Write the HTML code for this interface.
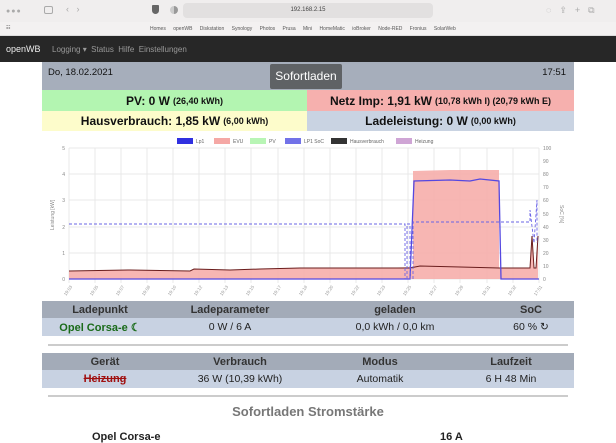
<!DOCTYPE html>
<html><head><meta charset="utf-8"><style>
*{margin:0;padding:0;box-sizing:border-box}
body{width:616px;height:436px;overflow:hidden;background:#fff;font-family:"Liberation Sans",sans-serif;position:relative}
.abs{position:absolute}
.tb{left:0;top:0;width:616px;height:22px;background:#f0eeee}
.bm{left:0;top:22px;width:616px;height:14px;background:#f3f1f1;border-bottom:1px solid #ddd;font-size:5px;color:#555}
.nav{left:0;top:36px;width:616px;height:26px;background:#272727;color:#999;font-size:8px}
.c{left:42px;width:532px}
.cell{position:absolute;display:flex;align-items:center;justify-content:center;font-weight:bold;font-size:12px;color:#111}
.cell small{font-size:9px;margin-left:3px}
table{border-collapse:collapse;width:532px;font-size:10.5px;text-align:center;table-layout:fixed}
th{background:#a3abb8;color:#333;height:17px;font-weight:bold;font-size:11px}
td{background:#c8d2e2;color:#222;height:18px}
.hr{height:2px;background:#ccc;left:48px;width:520px}
</style></head><body>
<div class="abs tb">
 <div class="abs" style="left:6px;top:8px;font-size:7px;color:#aaa;letter-spacing:1px">●●●</div>
 <div class="abs" style="left:44px;top:6px;width:9px;height:8px;border:1px solid #aaa;border-radius:2px"></div>
 <div class="abs" style="left:66px;top:4px;font-size:9px;color:#aaa">‹ &nbsp; ›</div>
 <div class="abs" style="left:152px;top:5px;width:7px;height:9px;background:#666;border-radius:1px 1px 4px 4px"></div>
 <div class="abs" style="left:170px;top:6px;width:8px;height:8px;border-radius:50%;background:linear-gradient(90deg,#ccc 50%,#999 50%)"></div>
 <div class="abs" style="left:183px;top:3px;width:250px;height:15px;background:#e2e0e0;border-radius:4px;font-size:6px;text-align:center;line-height:15px;color:#444">192.168.2.15</div>
 <div class="abs" style="left:546px;top:5px;font-size:9px;color:#aaa;letter-spacing:8px">◌⇪+⧉</div>
</div>
<div class="abs bm"><span class="abs" style="left:6px;top:3px">☷</span><span class="abs" style="left:150px;top:4px;word-spacing:6px">Homes openWB Diskstation Synology&nbsp;Photos Prusa&nbsp;Mini HomeMatic ioBroker Node-RED Fronius SolarWeb</span></div>
<div class="abs nav"><span class="abs" style="left:6px;top:8px;color:#eee;font-size:9px">openWB</span><span class="abs" style="left:52px;top:9px">Logging ▾ &nbsp;Status &nbsp;Hilfe &nbsp;Einstellungen</span></div>

<div class="abs c" style="top:62px;height:28px;background:#a6aebb">
 <span class="abs" style="left:6px;top:5px;font-size:9.5px;color:#111">Do, 18.02.2021</span>
 <div class="abs" style="left:228px;top:2px;width:72px;height:25px;background:#5f6265;color:#fff;font-size:12px;text-align:center;line-height:25px;border-radius:2px">Sofortladen</div>
 <span class="abs" style="right:8px;top:5px;font-size:9.5px;color:#111">17:51</span>
</div>
<div class="cell" style="left:42px;top:90px;width:265px;height:21px;background:#b3f5b1">PV: 0 W<small>(26,40 kWh)</small></div>
<div class="cell" style="left:307px;top:90px;width:267px;height:21px;background:#f6b0ae">Netz Imp: 1,91 kW<small>(10,78 kWh I) (20,79 kWh E)</small></div>
<div class="cell" style="left:42px;top:111px;width:265px;height:20px;background:#fdfccb">Hausverbrauch: 1,85 kW<small>(6,00 kWh)</small></div>
<div class="cell" style="left:307px;top:111px;width:267px;height:20px;background:#c9d3e2">Ladeleistung: 0 W<small>(0,00 kWh)</small></div>

<svg class="abs" style="left:0;top:132px" width="616" height="168" viewBox="0 132 616 168" font-family="Liberation Sans" font-size="5">
 <g>
  <rect x="177" y="138" width="16" height="6" fill="#3030e0"/><text x="196" y="143" fill="#666">Lp1</text>
  <rect x="214" y="138" width="16" height="6" fill="#f5a8a5"/><text x="233" y="143" fill="#666">EVU</text>
  <rect x="250" y="138" width="16" height="6" fill="#b8f5b5"/><text x="269" y="143" fill="#666">PV</text>
  <rect x="285" y="138" width="16" height="6" fill="#7272e8"/><text x="304" y="143" fill="#666">LP1 SoC</text>
  <rect x="331" y="138" width="16" height="6" fill="#333"/><text x="350" y="143" fill="#666">Hausverbrauch</text>
  <rect x="396" y="138" width="16" height="6" fill="#cfa5d5"/><text x="415" y="143" fill="#666">Heizung</text>
 </g>
 <g stroke="#e2e2e2" stroke-width="0.7">
  <line x1="69" y1="148" x2="539" y2="148"/><line x1="69" y1="174" x2="539" y2="174"/><line x1="69" y1="200" x2="539" y2="200"/><line x1="69" y1="227" x2="539" y2="227"/><line x1="69" y1="253" x2="539" y2="253"/><line x1="69" y1="279" x2="539" y2="279"/>
  <path d="M69 148V283M95 148V283M121 148V283M147 148V283M173 148V283M199 148V283M225 148V283M251 148V283M278 148V283M304 148V283M330 148V283M356 148V283M382 148V283M408 148V283M434 148V283M460 148V283M487 148V283M513 148V283M539 148V283"/>
 </g>
 <path d="M69 271L130 270L190 271L194 269L230 270L260 269L300 268L380 268L413 267V171L450 170L499 170V268L530 268L532 236L534 268L536 268L538 236V279H69Z" fill="#f6aeab" fill-opacity="0.9"/>
 <path d="M69 271L130 270L190 271L194 269L230 270L260 269L300 268L410 268L420 266L460 267L499 268L530 268L532 236L534 268L536 268L538 236" fill="none" stroke="#6a1d1d" stroke-width="1"/>
 <path d="M69 279H410L414 181L450 180L470 181L480 179L499 181L501 279H539" fill="none" stroke="#5548e0" stroke-width="1.3"/>
 <path d="M69 224H405V279M407 279V224H410V279M413 279V222H530V210L534 243L537 200V243" fill="none" stroke="#6a64e6" stroke-width="0.9" stroke-dasharray="3,2"/>
 <g fill="#888" text-anchor="end"><text x="65" y="150">5</text><text x="65" y="176">4</text><text x="65" y="202">3</text><text x="65" y="229">2</text><text x="65" y="255">1</text><text x="65" y="281">0</text></g>
 <g fill="#888"><text x="543" y="150">100</text><text x="543" y="163">90</text><text x="543" y="176">80</text><text x="543" y="189">70</text><text x="543" y="202">60</text><text x="543" y="216">50</text><text x="543" y="229">40</text><text x="543" y="242">30</text><text x="543" y="255">20</text><text x="543" y="268">10</text><text x="543" y="281">0</text></g>
 <text transform="translate(54 230) rotate(-90)" fill="#888" font-size="5">Leistung [kW]</text>
 <text transform="translate(560 205) rotate(90)" fill="#888" font-size="5">SoC [%]</text>
 <g fill="#999" font-size="4.5">
  <text transform="translate(66 296) rotate(-55)">19:03</text><text transform="translate(92 296) rotate(-55)">19:05</text><text transform="translate(118 296) rotate(-55)">19:07</text><text transform="translate(144 296) rotate(-55)">19:08</text><text transform="translate(170 296) rotate(-55)">19:10</text><text transform="translate(196 296) rotate(-55)">19:12</text><text transform="translate(222 296) rotate(-55)">19:13</text><text transform="translate(248 296) rotate(-55)">19:15</text><text transform="translate(275 296) rotate(-55)">19:17</text><text transform="translate(301 296) rotate(-55)">19:18</text><text transform="translate(327 296) rotate(-55)">19:20</text><text transform="translate(353 296) rotate(-55)">19:22</text><text transform="translate(379 296) rotate(-55)">19:23</text><text transform="translate(405 296) rotate(-55)">19:25</text><text transform="translate(431 296) rotate(-55)">19:27</text><text transform="translate(457 296) rotate(-55)">19:29</text><text transform="translate(484 296) rotate(-55)">19:31</text><text transform="translate(510 296) rotate(-55)">19:32</text><text transform="translate(536 296) rotate(-55)">17:51</text>
 </g>
</svg>

<div class="abs c" style="top:301px"><table>
<colgroup><col style="width:116px"><col style="width:144px"><col style="width:186px"><col style="width:86px"></colgroup>
<tr><th>Ladepunkt</th><th>Ladeparameter</th><th>geladen</th><th>SoC</th></tr>
<tr><td style="color:#1a6b1a;font-weight:bold;font-size:11px">Opel Corsa-e ☾</td><td>0 W / 6 A</td><td>0,0 kWh / 0,0 km</td><td>60 % ↻</td></tr></table></div>
<div class="abs hr" style="top:344px"></div>
<div class="abs c" style="top:353px"><table>
<colgroup><col style="width:126px"><col style="width:144px"><col style="width:136px"><col style="width:126px"></colgroup>
<tr><th>Gerät</th><th>Verbrauch</th><th>Modus</th><th>Laufzeit</th></tr>
<tr><td style="color:#a01010;font-weight:bold;text-decoration:line-through;font-size:11px">Heizung</td><td>36 W (10,39 kWh)</td><td>Automatik</td><td>6 H 48 Min</td></tr></table></div>
<div class="abs hr" style="top:395px"></div>
<div class="abs" style="left:0;width:616px;top:404px;text-align:center;font-size:13px;font-weight:bold;color:#777">Sofortladen Stromstärke</div>
<div class="abs" style="left:92px;top:431px;font-size:11px;font-weight:bold;color:#222">Opel Corsa-e</div>
<div class="abs" style="left:440px;top:431px;font-size:11px;font-weight:bold;color:#222">16 A</div>
</body></html>
